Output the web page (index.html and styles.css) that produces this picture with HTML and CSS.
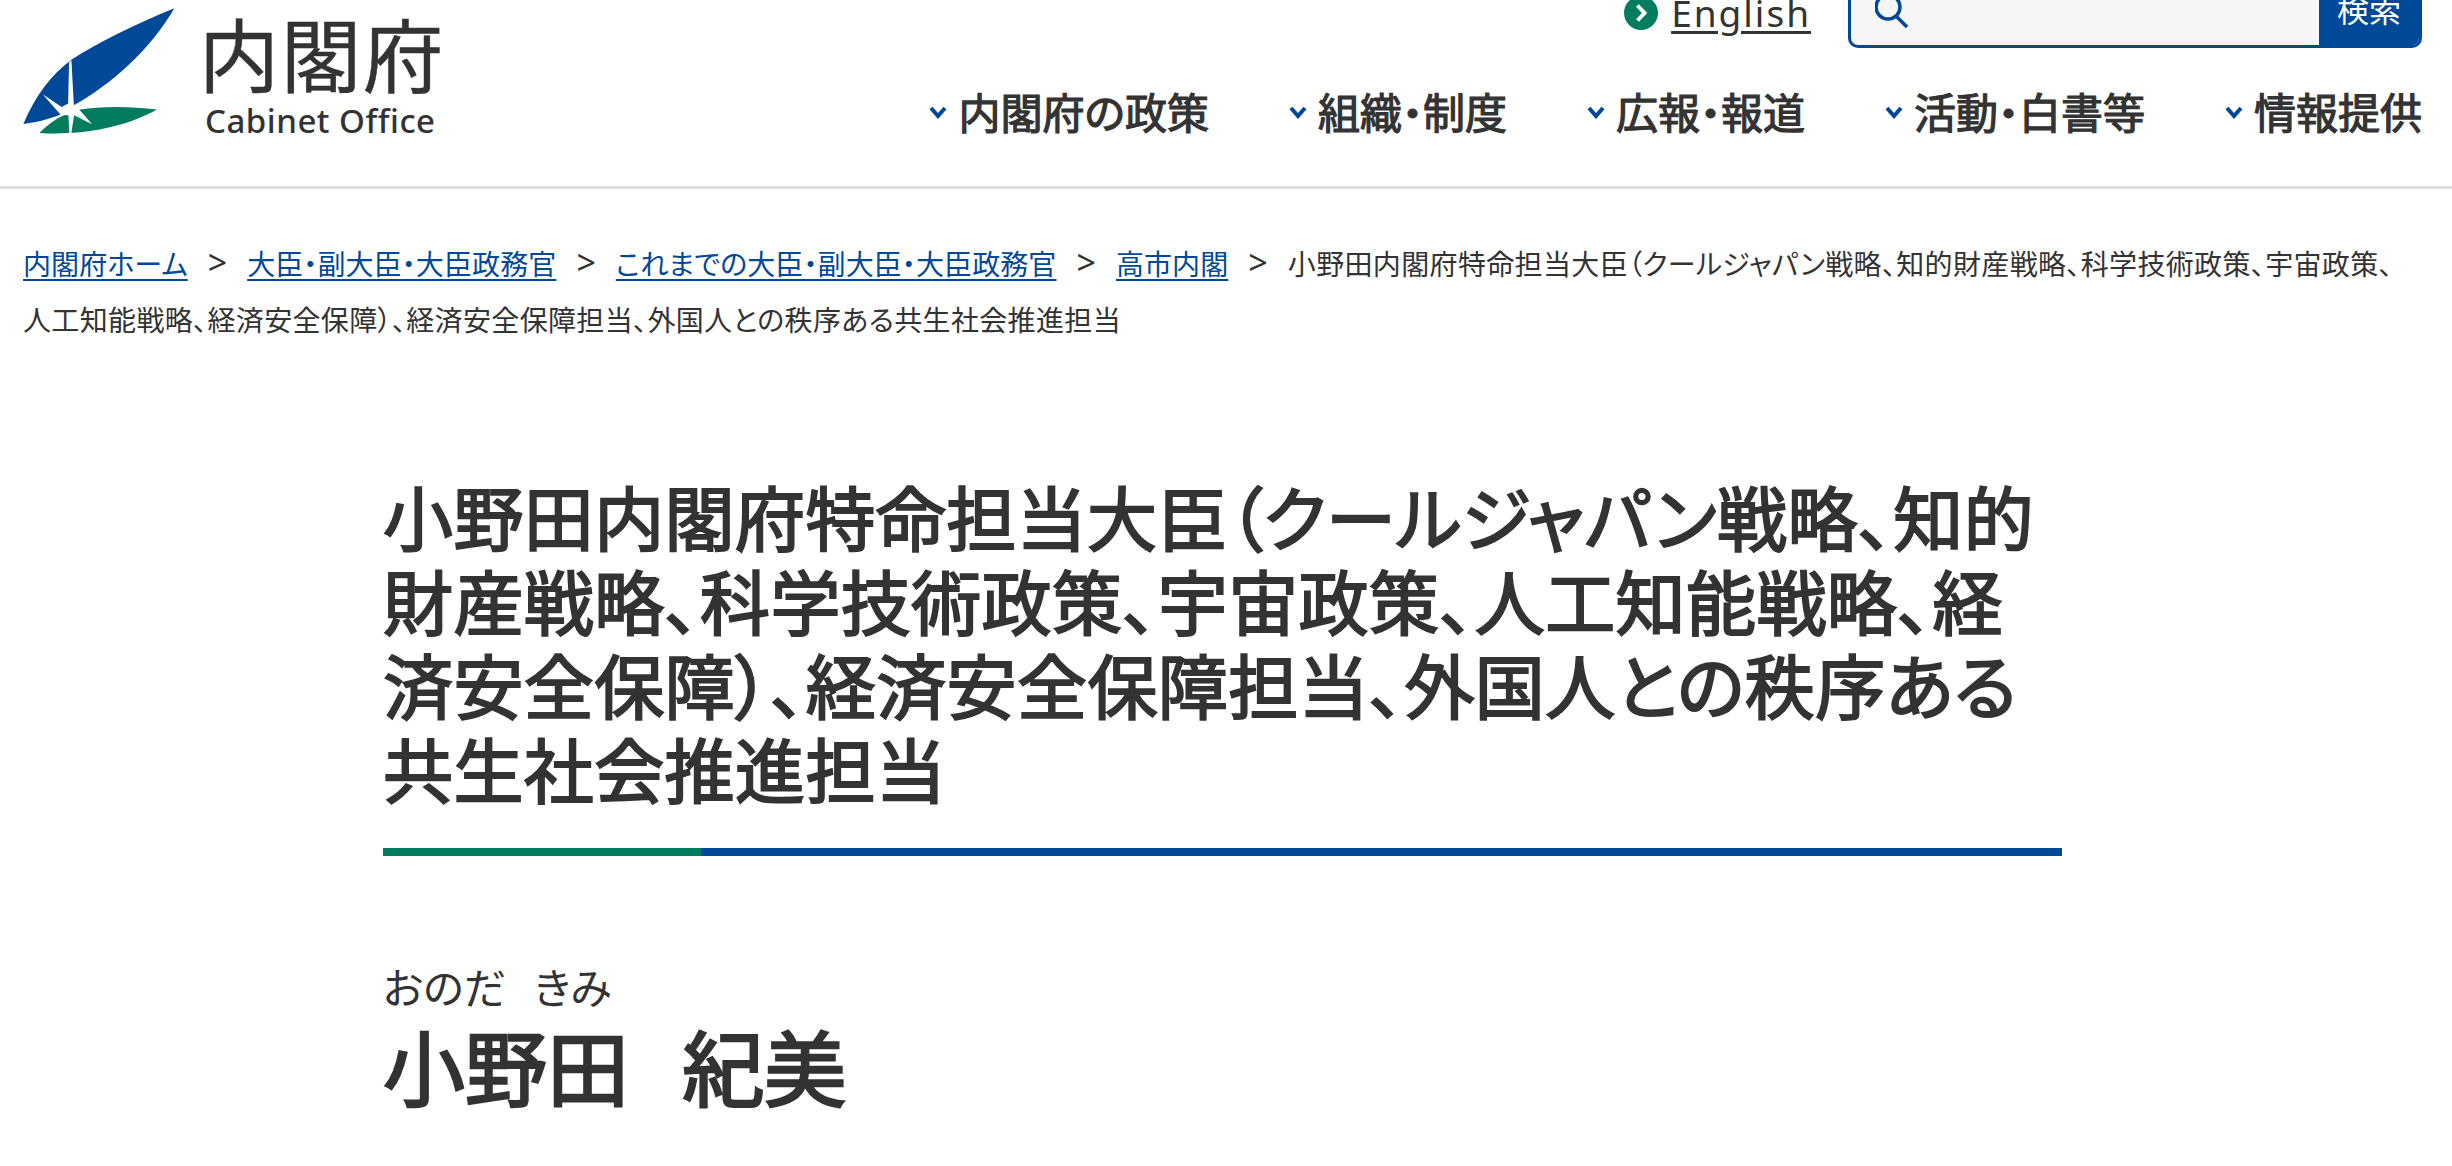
FILE: index.html
```html
<!DOCTYPE html>
<html lang="ja">
<head>
  <meta charset="UTF-8">
  <title>小野田内閣府特命担当大臣 | 内閣府</title>
  <link rel="stylesheet" href="styles.css">
</head>
<body>
  <header class="header">
    <a class="logo" href="#">
      <svg class="logo-mark" viewBox="60 15 470 395" aria-hidden="true">
        <path fill="#004898" d="M522 25C400 75 290 130 215 178C150 225 105 290 70 371C120 365 165 352 210 330L225 313C330 255 450 150 522 25Z"/>
        <path fill="#007d5f" d="M470 328C390 318 300 318 240 328C190 340 150 365 118 398C220 405 360 390 470 328Z"/>
        <path fill="#fff" d="M207 186L214 180L221 312L232 322L276 372L222 345L213 402H208L205 345L183 345L128 282L185 320L204 310Z"/>
      </svg>
      <span class="logo-text">
        <span class="logo-ja">内閣府</span>
        <span class="logo-en">Cabinet Office</span>
      </span>
    </a>
    <div class="header-right">
      <div class="utility">
        <a class="lang" href="#">
          <svg class="lang-icon" viewBox="0 0 34 34" aria-hidden="true">
            <circle cx="17" cy="17" r="17" fill="#007d5f"/>
            <path d="M13.500 9.500L20.500 17L13.500 24.500" fill="none" stroke="#fff" stroke-width="4"/>
          </svg>
          <span class="lang-text">English</span>
        </a>
        <form class="search">
          <svg class="search-icon" viewBox="0 0 34 60" aria-hidden="true">
            <circle cx="13" cy="27" r="12" fill="none" stroke="#004898" stroke-width="3.500"/>
            <path d="M21 36L32 47" fill="none" stroke="#004898" stroke-width="3.500"/>
          </svg>
          <span class="search-field"></span>
          <button class="search-btn" type="button">検索</button>
        </form>
      </div>
      <nav class="nav">
        <a class="nav-item" href="#"><svg class="chev" viewBox="0 0 18 14"><path d="M2 3L9 11L16 3" /></svg>内閣府の政策</a>
        <a class="nav-item" href="#"><svg class="chev" viewBox="0 0 18 14"><path d="M2 3L9 11L16 3" /></svg>組織・制度</a>
        <a class="nav-item" href="#"><svg class="chev" viewBox="0 0 18 14"><path d="M2 3L9 11L16 3" /></svg>広報・報道</a>
        <a class="nav-item" href="#"><svg class="chev" viewBox="0 0 18 14"><path d="M2 3L9 11L16 3" /></svg>活動・白書等</a>
        <a class="nav-item" href="#"><svg class="chev" viewBox="0 0 18 14"><path d="M2 3L9 11L16 3" /></svg>情報提供</a>
      </nav>
    </div>
  </header>

  <div class="breadcrumb">
    <a href="#">内閣府ホーム</a><span class="sep">&gt;</span><a href="#">大臣・副大臣・大臣政務官</a><span class="sep">&gt;</span><a href="#">これまでの大臣・副大臣・大臣政務官</a><span class="sep">&gt;</span><a href="#">高市内閣</a><span class="sep">&gt;</span><span class="current">小野田内閣府特命担当大臣（クールジャパン戦略、知的財産戦略、科学技術政策、宇宙政策、人工知能戦略、経済安全保障）、経済安全保障担当、外国人との秩序ある共生社会推進担当</span>
  </div>

  <main class="main">
    <h1 class="title">小野田内閣府特命担当大臣（クールジャパン戦略、知的財産戦略、科学技術政策、宇宙政策、人工知能戦略、経済安全保障）、経済安全保障担当、外国人との秩序ある共生社会推進担当</h1>
    <p class="kana">おのだ<span class="given">きみ</span></p>
    <p class="name">小野田<span class="given">紀美</span></p>
  </main>
</body>
</html>
```

FILE: styles.css
```css
html, body {
  margin: 0;
  height: 1166px;
  overflow: hidden;
}
body {
  background-color: #fff;
  color: #333;
  font-family: "Noto Sans CJK JP", "Noto Sans", sans-serif;
  font-feature-settings: "palt";
}
a {
  color: inherit;
  text-decoration: none;
}
.header {
  display: flex;
  justify-content: space-between;
  height: 186px;
  padding: 0 30px 0 20px;
  border-bottom: 3px solid #ddd;
}
.logo {
  display: flex;
  align-items: flex-start;
  gap: 22px;
  padding-top: 5px;
}
.logo-mark {
  width: 157px;
  height: 132px;
}
.logo-text {
  display: flex;
  flex-direction: column;
  align-items: flex-start;
}
.logo-ja {
  font-size: 80px;
  line-height: 84px;
  margin-top: 4px;
  letter-spacing: 2px;
  font-feature-settings: normal;
  -webkit-text-stroke: 0.5px #333;
}
.logo-en {
  font-family: "Noto Sans", sans-serif;
  font-size: 33px;
  font-weight: 500;
  line-height: 40px;
  margin: 8px 0 0 6px;
  letter-spacing: 0.5px;
}
.header-right {
  display: flex;
  flex-direction: column;
  align-items: flex-end;
}
.utility {
  display: flex;
  align-items: flex-end;
  gap: 37px;
  height: 48px;
}
.lang {
  display: flex;
  align-items: center;
  gap: 13px;
  margin-bottom: 17px;
}
.lang-icon {
  width: 34px;
  height: 34px;
}
.lang-text {
  font-family: "Noto Sans", sans-serif;
  font-size: 37px;
  line-height: 36px;
  letter-spacing: 2px;
  text-decoration: underline;
  text-underline-offset: 4px;
}
.search {
  display: flex;
  box-sizing: border-box;
  width: 574px;
  height: 80px;
  flex-shrink: 0;
  border: 3px solid #004898;
  border-radius: 10px;
  background-color: #f6f6f6;
  overflow: hidden;
}
.search-icon {
  width: 34px;
  height: 60px;
  margin: 9px 0 0 24px;
}
.search-field {
  flex: 1;
}
.search-btn {
  width: 100px;
  padding: 0;
  border: none;
  background-color: #004898;
  color: #fff;
  font-family: inherit;
  font-size: 32px;
}
.nav {
  display: flex;
  gap: 80px;
  margin-top: 36px;
}
.nav-item {
  display: flex;
  align-items: center;
  gap: 11px;
  font-size: 42px;
  line-height: 54px;
  -webkit-text-stroke: 1.200px #333;
}
.chev {
  width: 18px;
  height: 14px;
  margin-top: 2px;
  fill: none;
  stroke: #004898;
  stroke-width: 4;
}
.breadcrumb {
  padding: 46px 45px 0 23px;
  font-size: 28px;
  line-height: 56px;
}
.breadcrumb a {
  color: #004898;
  letter-spacing: 0.1px;
  text-decoration: underline;
  text-underline-offset: 4px;
}
.sep {
  margin: 0 20px;
  font-family: "Noto Sans", sans-serif;
  font-size: 34px;
  line-height: 1;
}
.current {
  letter-spacing: 0.35px;
}
.main {
  width: 1679px;
  margin: 0 0 0 383px;
}
.title {
  margin: 127px 0 0;
  padding-bottom: 38px;
  border-bottom: 8px solid #004898;
  font-size: 70px;
  font-weight: 400;
  letter-spacing: 0.4px;
  line-height: 84px;
  position: relative;
  -webkit-text-stroke: 2px #333;
}
.title::after {
  content: "";
  position: absolute;
  left: 0;
  bottom: -8px;
  width: 318px;
  height: 8px;
  background-color: #007d5f;
}
.kana {
  margin: 100px 0 0;
  font-size: 42px;
  line-height: 60px;
}
.name {
  margin: -1px 0 0;
  font-size: 82px;
  line-height: 100px;
  -webkit-text-stroke: 2.400px #333;
}
.given {
  margin-left: 0.650em;
}
```
